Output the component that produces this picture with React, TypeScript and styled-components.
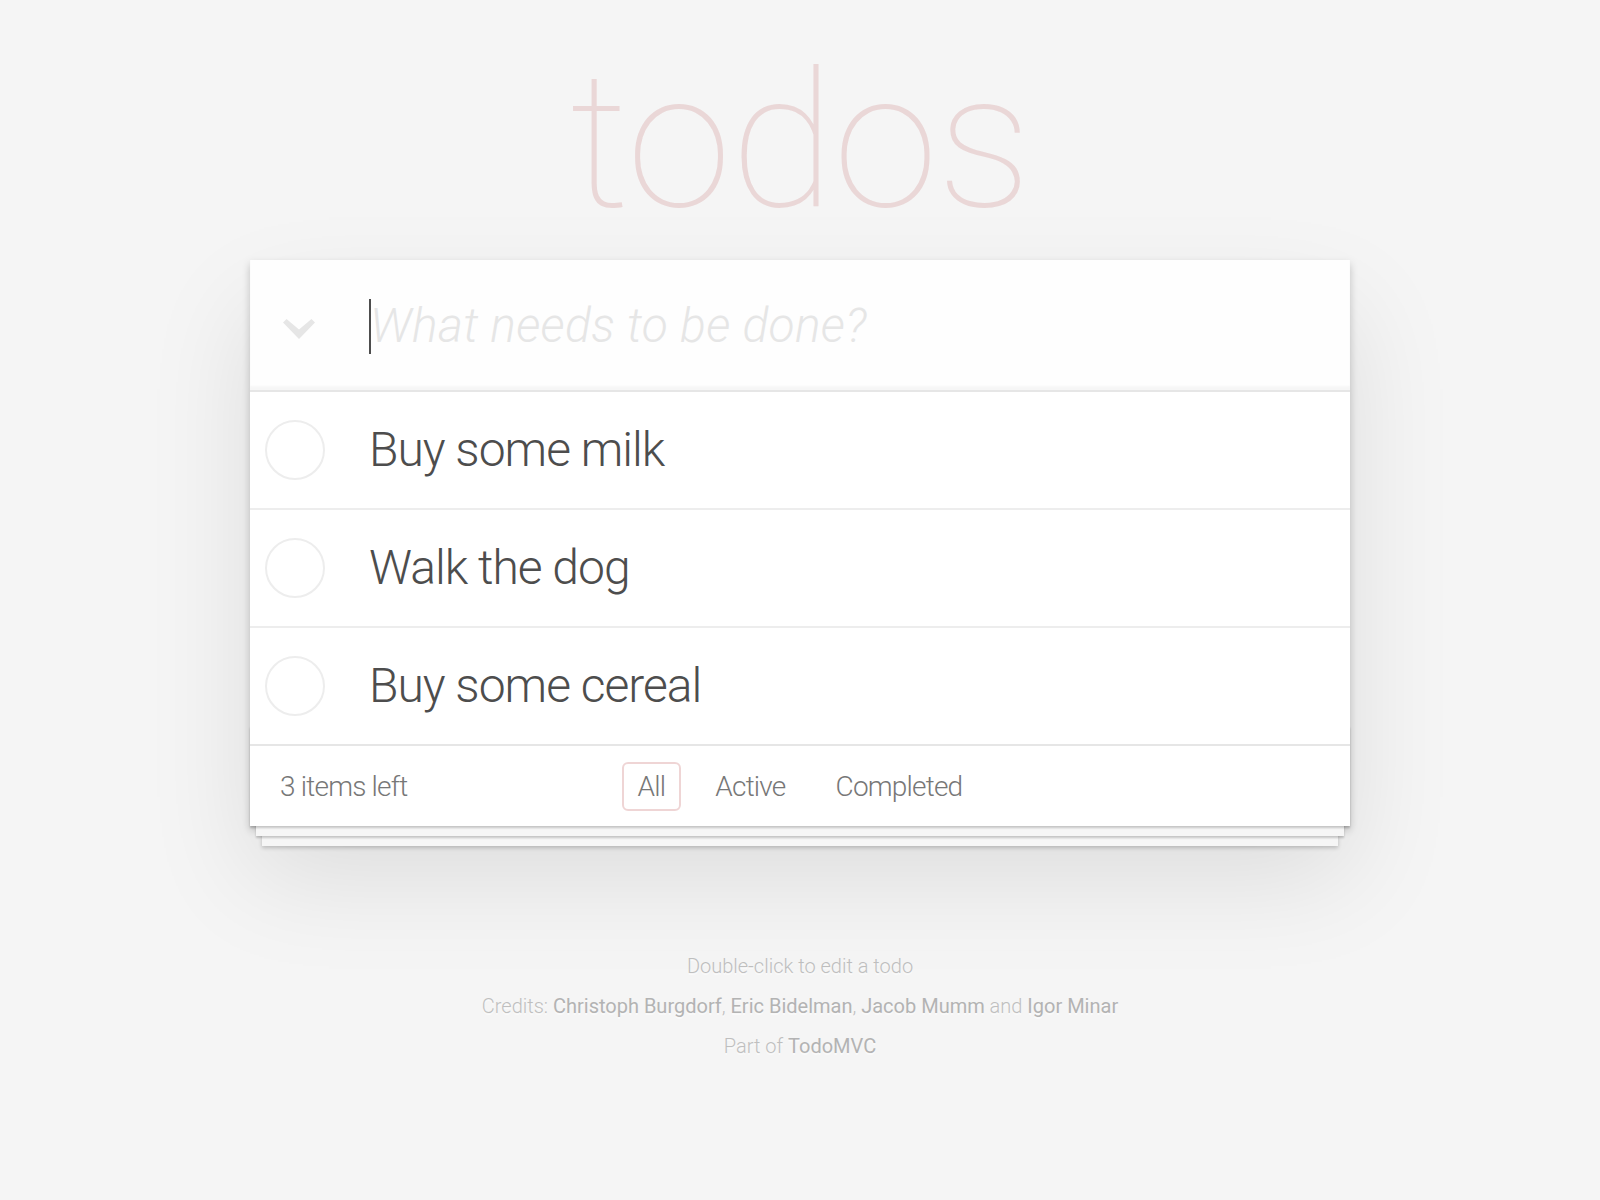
import React from "react";
import styled, { createGlobalStyle } from "styled-components";

const GlobalStyle = createGlobalStyle`
  html, body {
    margin: 0;
    padding: 0;
  }
  body {
    background: #f5f5f5;
    font-family: Roboto, "Liberation Sans", Arial, sans-serif;
    font-weight: 300;
    color: #4d4d4d;
    -webkit-font-smoothing: antialiased;
  }
  * { box-sizing: border-box; }
`;

const Page = styled.div`
  max-width: 1100px;
  margin: 0 auto;
`;

const Title = styled.h1`
  margin: 0;
  height: 260px;
  padding-top: 46px;
  font-size: 190px;
  line-height: 190px;
  font-weight: 100;
  letter-spacing: -1px;
  text-align: center;
  color: rgba(175, 47, 47, 0.15);
`;

const Card = styled.section`
  position: relative;
  background: #fff;
  box-shadow: 0 4px 8px 0 rgba(0, 0, 0, 0.2), 0 50px 100px 0 rgba(0, 0, 0, 0.1);
`;

const Header = styled.header`
  display: flex;
  align-items: center;
  height: 130px;
  background: rgba(0, 0, 0, 0.003);
  box-shadow: inset 0 -4px 2px rgba(0, 0, 0, 0.03);
`;

const ToggleAll = styled.div`
  width: 120px;
  height: 130px;
  display: flex;
  align-items: center;
  padding-left: 33px;
  padding-top: 8px;
  flex-shrink: 0;
`;

const InputWrap = styled.div`
  position: relative;
  flex: 1;
  height: 130px;
`;

const Caret = styled.span`
  position: absolute;
  left: -1px;
  top: 39px;
  width: 2px;
  height: 55px;
  background: #4d4d4d;
  pointer-events: none;
`;

const NewTodo = styled.input`
  width: 100%;
  height: 130px;
  border: none;
  outline: none;
  background: transparent;
  padding: 0 32px 0 0;
  font-family: inherit;
  font-size: 48px;
  font-weight: 300;
  letter-spacing: 0.3px;
  color: #4d4d4d;
  caret-color: transparent;
  &::placeholder {
    font-style: italic;
    font-weight: 300;
    color: #e6e6e6;
  }
`;

const List = styled.ul`
  margin: 0;
  padding: 0;
  list-style: none;
  border-top: 2px solid #e6e6e6;
`;

const Item = styled.li`
  display: flex;
  align-items: center;
  height: 118px;
  border-bottom: 2px solid #ededed;
  &:last-child {
    height: 116px;
    border-bottom: none;
  }
`;

const Circle = styled.span`
  width: 60px;
  height: 60px;
  margin-left: 15px;
  margin-right: 44px;
  border-radius: 50%;
  border: 2px solid #ededed;
  flex-shrink: 0;
`;

const Label = styled.label`
  font-size: 48px;
  line-height: 1.2;
  font-weight: 300;
  letter-spacing: -1px;
  color: #4d4d4d;
`;

const Footer = styled.footer`
  position: relative;
  display: grid;
  grid-template-columns: 1fr auto 1fr;
  align-items: center;
  height: 82px;
  padding: 0 30px;
  border-top: 2px solid #e6e6e6;
  color: #777;
  font-size: 28px;
  letter-spacing: -0.8px;
  &::before {
    content: "";
    position: absolute;
    left: 0;
    right: 0;
    bottom: 0;
    height: 100px;
    overflow: hidden;
    pointer-events: none;
    box-shadow: 0 2px 2px rgba(0, 0, 0, 0.2), 0 16px 0 -6px #f6f6f6,
      0 18px 2px -6px rgba(0, 0, 0, 0.2), 0 32px 0 -12px #f6f6f6,
      0 34px 4px -12px rgba(0, 0, 0, 0.2);
  }
`;

const Count = styled.span`
  position: relative;
  text-align: left;
`;

const Filters = styled.ul`
  position: relative;
  display: flex;
  gap: 18px;
  margin: 0;
  padding: 0;
  list-style: none;
`;

const FilterLink = styled.a<{ $selected?: boolean }>`
  display: block;
  padding: 6px 14px;
  line-height: 33px;
  border-radius: 6px;
  border: 2px solid ${(p) => (p.$selected ? "rgba(175, 47, 47, 0.2)" : "transparent")};
  color: inherit;
  text-decoration: none;
  cursor: pointer;
`;

const Info = styled.footer`
  margin-top: 130px;
  color: #bfbfbf;
  font-size: 20px;
  text-align: center;
  text-shadow: 0 2px 0 rgba(255, 255, 255, 0.5);
`;

const InfoLine = styled.p`
  margin: 20px 0;
  line-height: 1;
  &:first-child { margin-top: 0; }
`;

const InfoLink = styled.a`
  color: #b3b3b3;
  font-weight: 400;
  text-decoration: none;
`;

const Chevron = () => (
  <svg width="32" height="20" viewBox="0 0 32 20">
    <path d="M0 3.5 L3.5 0 L16 10.5 L28.5 0 L32 3.5 L16 20 Z" fill="#e6e6e6" />
  </svg>
);

const todos = ["Buy some milk", "Walk the dog", "Buy some cereal"];

export default function App() {
  return (
    <>
      <GlobalStyle />
      <Page>
        <Title>todos</Title>
        <Card>
          <Header>
            <ToggleAll>
              <Chevron />
            </ToggleAll>
            <InputWrap>
              <NewTodo placeholder="What needs to be done?" />
              <Caret />
            </InputWrap>
          </Header>
          <List>
            {todos.map((t) => (
              <Item key={t}>
                <Circle />
                <Label>{t}</Label>
              </Item>
            ))}
          </List>
          <Footer>
            <Count>3 items left</Count>
            <Filters>
              <li><FilterLink $selected>All</FilterLink></li>
              <li><FilterLink>Active</FilterLink></li>
              <li><FilterLink>Completed</FilterLink></li>
            </Filters>
            <span />
          </Footer>
        </Card>
        <Info>
          <InfoLine>Double-click to edit a todo</InfoLine>
          <InfoLine>
            Credits: <InfoLink>Christoph Burgdorf</InfoLink>, <InfoLink>Eric Bidelman</InfoLink>,{" "}
            <InfoLink>Jacob Mumm</InfoLink> and <InfoLink>Igor Minar</InfoLink>
          </InfoLine>
          <InfoLine>
            Part of <InfoLink>TodoMVC</InfoLink>
          </InfoLine>
        </Info>
      </Page>
    </>
  );
}
